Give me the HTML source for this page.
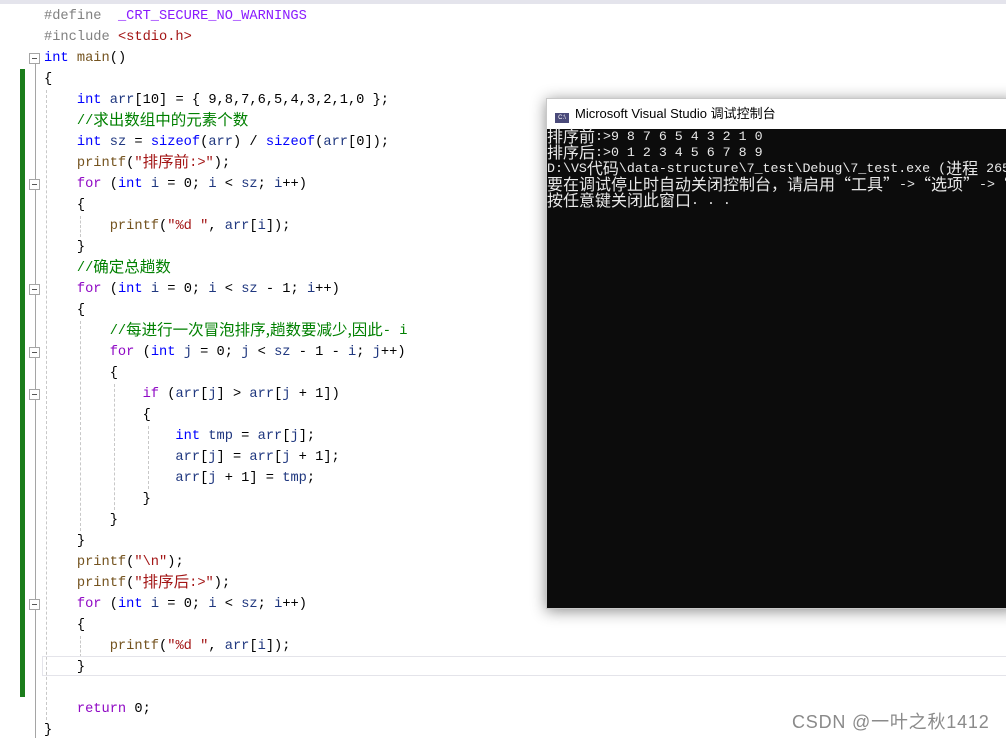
<!DOCTYPE html>
<html><head><meta charset="utf-8"><style>
body{margin:0;width:1006px;height:740px;background:#fff;overflow:hidden;position:relative;font-family:"Liberation Mono","Noto Sans CJK SC",monospace}
.top{position:absolute;left:0;top:0;width:1006px;height:4px;background:#e4e4ec}
.code{position:absolute;left:44px;top:6px;font-size:13.7px;color:#000}
.code div{height:21px;line-height:21px;white-space:pre;overflow:visible}
.c{font-family:"Noto Sans CJK SC",sans-serif;font-size:15.5px;line-height:0;position:relative;top:1px}
.k{color:#0000ff}.p{color:#8f08c4}.v{color:#1f377f}.f{color:#74531f}.s{color:#a31515}.g{color:#008000}.pp{color:#808080}.m{color:#8a1bff}
.green{position:absolute;left:20px;top:69px;width:5px;height:628px;background:#1b7d1b}
.fl{position:absolute;left:35px;width:1px;background:#a5a5a5}
.box{position:absolute;left:29px;width:9px;height:9px;border:1px solid #a5a5a5;background:#fff}
.box:after{content:"";position:absolute;left:2px;top:4px;width:5px;height:1px;background:#555}
.gd{position:absolute;width:0;border-left:1px dashed #c8c8c8}
.cur{position:absolute;left:42px;top:656px;width:964px;height:18px;border:1px solid #e4e4ea;border-right:none}
.win{position:absolute;left:546px;top:98px;width:470px;height:509px;background:#0c0c0c;box-shadow:0 2px 14px rgba(0,0,0,.45);border:1px solid #c8c8c8}
.tb{height:30px;background:#fff;font-family:"Liberation Sans","Noto Sans CJK SC",sans-serif;font-size:13px;line-height:30px;color:#000;padding-left:8px}
.ic{display:inline-block;width:14px;height:10px;background:#4a4a7a;color:#fff;font-size:6px;line-height:10px;text-align:center;vertical-align:-1px;margin-right:6px}
.con{color:#e8e8e8;font-family:"Liberation Mono",monospace;font-size:13.3px}
.con div{height:16px;line-height:16px;white-space:pre}
.cc{font-family:"Noto Sans CJK SC",sans-serif;font-size:16px;line-height:0;position:relative;top:2px}
.wm{position:absolute;left:792px;top:708px;font-family:"Liberation Sans","Noto Sans CJK SC",sans-serif;font-size:18px;letter-spacing:0.8px;color:#8a8a8a}
</style></head><body>
<div class="top"></div>
<div class="green"></div>
<div class="fl" style="top:62px;height:676px"></div>
<div class="box" style="top:53px"></div>
<div class="box" style="top:179px"></div>
<div class="box" style="top:284px"></div>
<div class="box" style="top:347px"></div>
<div class="box" style="top:389px"></div>
<div class="box" style="top:599px"></div>
<div class="gd" style="left:46px;top:90px;height:630px"></div>
<div class="gd" style="left:80px;top:216px;height:21px"></div>
<div class="gd" style="left:80px;top:321px;height:210px"></div>
<div class="gd" style="left:114px;top:384px;height:126px"></div>
<div class="gd" style="left:148px;top:426px;height:63px"></div>
<div class="gd" style="left:80px;top:636px;height:21px"></div>
<div class="cur"></div>
<div class="code">
<div><span class="pp">#define</span>  <span class="m">_CRT_SECURE_NO_WARNINGS</span></div>
<div><span class="pp">#include</span> <span class="s">&lt;stdio.h&gt;</span></div>
<div><span class="k">int</span> <span class="f">main</span>()</div>
<div>{</div>
<div>    <span class="k">int</span> <span class="v">arr</span>[10] = { 9,8,7,6,5,4,3,2,1,0 };</div>
<div>    <span class="g">//<span class="c">求出数组中的元素个数</span></span></div>
<div>    <span class="k">int</span> <span class="v">sz</span> = <span class="k">sizeof</span>(<span class="v">arr</span>) / <span class="k">sizeof</span>(<span class="v">arr</span>[0]);</div>
<div>    <span class="f">printf</span>(<span class="s">"<span class="c">排序前</span>:&gt;"</span>);</div>
<div>    <span class="p">for</span> (<span class="k">int</span> <span class="v">i</span> = 0; <span class="v">i</span> &lt; <span class="v">sz</span>; <span class="v">i</span>++)</div>
<div>    {</div>
<div>        <span class="f">printf</span>(<span class="s">"%d "</span>, <span class="v">arr</span>[<span class="v">i</span>]);</div>
<div>    }</div>
<div>    <span class="g">//<span class="c">确定总趟数</span></span></div>
<div>    <span class="p">for</span> (<span class="k">int</span> <span class="v">i</span> = 0; <span class="v">i</span> &lt; <span class="v">sz</span> - 1; <span class="v">i</span>++)</div>
<div>    {</div>
<div>        <span class="g">//<span class="c">每进行一次冒泡排序,趟数要减少,因此</span>- i</span></div>
<div>        <span class="p">for</span> (<span class="k">int</span> <span class="v">j</span> = 0; <span class="v">j</span> &lt; <span class="v">sz</span> - 1 - <span class="v">i</span>; <span class="v">j</span>++)</div>
<div>        {</div>
<div>            <span class="p">if</span> (<span class="v">arr</span>[<span class="v">j</span>] &gt; <span class="v">arr</span>[<span class="v">j</span> + 1])</div>
<div>            {</div>
<div>                <span class="k">int</span> <span class="v">tmp</span> = <span class="v">arr</span>[<span class="v">j</span>];</div>
<div>                <span class="v">arr</span>[<span class="v">j</span>] = <span class="v">arr</span>[<span class="v">j</span> + 1];</div>
<div>                <span class="v">arr</span>[<span class="v">j</span> + 1] = <span class="v">tmp</span>;</div>
<div>            }</div>
<div>        }</div>
<div>    }</div>
<div>    <span class="f">printf</span>(<span class="s">"\n"</span>);</div>
<div>    <span class="f">printf</span>(<span class="s">"<span class="c">排序后</span>:&gt;"</span>);</div>
<div>    <span class="p">for</span> (<span class="k">int</span> <span class="v">i</span> = 0; <span class="v">i</span> &lt; <span class="v">sz</span>; <span class="v">i</span>++)</div>
<div>    {</div>
<div>        <span class="f">printf</span>(<span class="s">"%d "</span>, <span class="v">arr</span>[<span class="v">i</span>]);</div>
<div>    }</div>
<div> </div>
<div>    <span class="p">return</span> 0;</div>
<div>}</div>
</div>
<div class="win">
<div class="tb"><span class="ic">C:\</span>Microsoft Visual Studio 调试控制台</div>
<div class="con">
<div><span class="cc">排序前</span>:&gt;9 8 7 6 5 4 3 2 1 0</div>
<div><span class="cc">排序后</span>:&gt;0 1 2 3 4 5 6 7 8 9</div>
<div>D:\VS<span class="cc">代码</span>\data-structure\7_test\Debug\7_test.exe (<span class="cc">进程</span> 265</div>
<div><span class="cc">要在调试停止时自动关闭控制台，请启用“工具”</span>-&gt;<span class="cc">“选项”</span>-&gt;<span class="cc">“</span></div>
<div><span class="cc">按任意键关闭此窗口</span>. . .</div>
</div>
</div>
<div class="wm">CSDN @一叶之秋1412</div>
</body></html>
